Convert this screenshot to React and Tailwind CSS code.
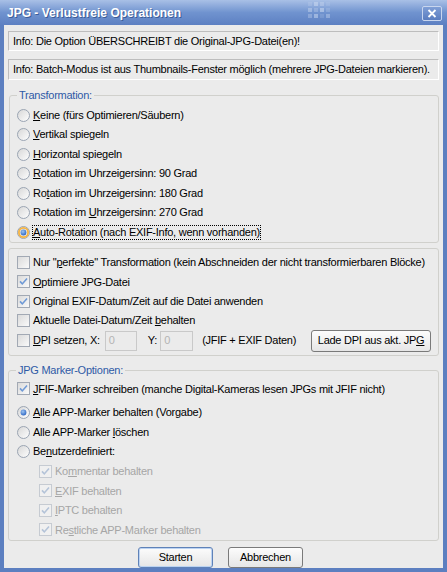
import React from "react";

const F = "font-['Liberation_Sans',Arial,sans-serif]";

function L({ t, u }) {
  if (u === undefined || u < 0) return <span>{t}</span>;
  return (
    <span>
      {t.slice(0, u)}
      <span className="underline decoration-1 underline-offset-[1px]">{t[u]}</span>
      {t.slice(u + 1)}
    </span>
  );
}

function RadioIcon({ checked, hot }) {
  return (
    <svg width="13" height="13" viewBox="0 0 13 13" className="shrink-0">
      <defs>
        <linearGradient id="rg" x1="0" y1="0" x2="1" y2="1">
          <stop offset="0" stopColor="#d6d6d6" />
          <stop offset="1" stopColor="#ffffff" />
        </linearGradient>
        <radialGradient id="rd" cx="0.4" cy="0.35" r="0.7">
          <stop offset="0" stopColor="#9cc4f2" />
          <stop offset="1" stopColor="#2a63c2" />
        </radialGradient>
      </defs>
      <circle cx="6.5" cy="6.5" r="6" fill="url(#rg)" stroke="#9aa4b2" strokeWidth="1" />
      {hot && <circle cx="6.5" cy="6.5" r="4.6" fill="none" stroke="#f6b441" strokeWidth="1.8" />}
      {checked && <circle cx="6.5" cy="6.5" r="2.9" fill="url(#rd)" />}
    </svg>
  );
}

function CheckIcon({ checked, disabled }) {
  return (
    <svg width="13" height="13" viewBox="0 0 13 13" className="shrink-0">
      <defs>
        <linearGradient id="cg" x1="0" y1="0" x2="1" y2="1">
          <stop offset="0" stopColor="#d9d9d9" />
          <stop offset="1" stopColor="#fbfbfb" />
        </linearGradient>
      </defs>
      <rect x="0.5" y="0.5" width="12" height="12" fill={disabled ? "#f0f0f0" : "url(#cg)"} stroke={disabled ? "#c6cbd2" : "#a2a9b4"} />
      {checked && (
        <path d="M3 6.4 L5.3 8.9 L10 3.4" fill="none" stroke={disabled ? "#b4c3d8" : "#6f9ad6"} strokeWidth="1.6" />
      )}
    </svg>
  );
}

function Radio({ t, u, checked, hot, focus, h = "h-[19.5px]" }) {
  return (
    <div className={`flex items-center whitespace-nowrap ${h}`}>
      <RadioIcon checked={checked} hot={hot} />
      <span className={`ml-[3px] leading-[13px] ${focus ? "outline outline-1 outline-dotted outline-black" : ""}`}>
        <L t={t} u={u} />
      </span>
    </div>
  );
}

function Check({ t, u, checked, disabled, h = "h-[19.5px]" }) {
  return (
    <div className={`flex items-center whitespace-nowrap ${h}`}>
      <CheckIcon checked={checked} disabled={disabled} />
      <span className={`ml-[3px] ${disabled ? "text-[#a6a6a6]" : ""}`}>
        <L t={t} u={u} />
      </span>
    </div>
  );
}

function Group({ label, className, children }) {
  return (
    <div className={`relative border border-[#d0d0cc] rounded-[3px] ${className}`}>
      {label && (
        <span className="absolute left-[7px] top-[-8px] px-[2px] bg-[#ebebeb] text-[#2f5aa6] leading-[14px] whitespace-nowrap">
          {label}
        </span>
      )}
      {children}
    </div>
  );
}

function Btn({ children, def, className }) {
  return (
    <div
      className={`flex items-center justify-center whitespace-nowrap rounded-[3px] border ${
        def ? "border-[#5f82b8] shadow-[inset_0_0_0_1px_#bcd3f2]" : "border-[#7a7a7a]"
      } bg-gradient-to-b from-[#fcfcfc] to-[#e6e6e6] ${className}`}
    >
      {children}
    </div>
  );
}

export default function App() {
  return (
    <div className={`w-[447px] h-[572px] flex flex-col bg-[#5c7fc0] ${F} text-[11px] tracking-[-0.25px] text-black`}>
      {/* Title bar */}
      <div className="relative h-[25px] shrink-0 flex items-center bg-gradient-to-b from-[#a9c0e6] via-[#7093cf] to-[#5d80c2]">
        <span className="ml-[7px] text-white font-bold text-[12px] tracking-normal whitespace-nowrap [text-shadow:1px_1px_0_#3c5c98]">
          JPG - Verlustfreie Operationen
        </span>
        <div className="absolute left-[308px] top-[2px] grid grid-cols-4 gap-[2px] opacity-60">
          <div className="w-[4px] h-[4px] bg-[#c7d6ef] opacity-40" />
          <div className="w-[4px] h-[4px] bg-[#c7d6ef]" />
          <div className="w-[4px] h-[4px] bg-[#c7d6ef] opacity-70" />
          <div className="w-[4px] h-[4px] bg-[#c7d6ef] opacity-30" />
          <div className="w-[4px] h-[4px] bg-[#c7d6ef] opacity-80" />
          <div className="w-[4px] h-[4px] bg-[#c7d6ef] opacity-50" />
          <div className="w-[4px] h-[4px] bg-[#c7d6ef]" />
          <div className="w-[4px] h-[4px] bg-[#c7d6ef] opacity-40" />
          <div className="w-[4px] h-[4px] bg-[#c7d6ef] opacity-60" />
          <div className="w-[4px] h-[4px] bg-[#c7d6ef] opacity-90" />
          <div className="w-[4px] h-[4px] bg-[#c7d6ef] opacity-30" />
          <div className="w-[4px] h-[4px] bg-[#c7d6ef] opacity-70" />
        </div>
        <div className="absolute left-[422px] top-[6px] w-[20px] h-[15px] rounded-[2px] border border-[#c9d6ee] bg-gradient-to-b from-[#7f9ed6] to-[#5a7dbf] flex items-center justify-center">
          <svg width="10" height="9" viewBox="0 0 10 9">
            <path d="M1.5 1 L8.5 8 M8.5 1 L1.5 8" stroke="white" strokeWidth="1.8" />
          </svg>
        </div>
      </div>

      {/* Client area */}
      <div className="flex-1 mx-[4px] mb-[4px] bg-[#ebebeb] flex flex-col px-[4px]">
        <div className="mt-[6px] h-[20px] flex items-center whitespace-nowrap pl-[4px] border border-t-[#bdbdbd] border-l-[#bdbdbd] border-b-white border-r-white">
          Info: Die Option ÜBERSCHREIBT die Original-JPG-Datei(en)!
        </div>
        <div className="mt-[8px] h-[21px] flex items-center whitespace-nowrap pl-[4px] border border-t-[#bdbdbd] border-l-[#bdbdbd] border-b-white border-r-white">
          Info: Batch-Modus ist aus Thumbnails-Fenster möglich (mehrere JPG-Dateien markieren).
        </div>

        <Group label="Transformation:" className="mt-[15px] ml-[1px] pt-[9.5px] pl-[7px]">
          <Radio t="Keine (fürs Optimieren/Säubern)" u={0} />
          <Radio t="Vertikal spiegeln" u={0} />
          <Radio t="Horizontal spiegeln" u={0} />
          <Radio t="Rotation im Uhrzeigersinn: 90 Grad" u={0} />
          <Radio t="Rotation im Uhrzeigersinn: 180 Grad" u={2} />
          <Radio t="Rotation im Uhrzeigersinn: 270 Grad" u={12} />
          <Radio t="Auto-Rotation (nach EXIF-Info, wenn vorhanden)" u={0} checked hot focus />
        </Group>

        <Group className="mt-[5px] pt-[4px] pl-[8px] pb-[4px]">
          <Check t={'Nur "perfekte" Transformation (kein Abschneiden der nicht transformierbaren Blöcke)'} u={5} h="h-[19.25px]" />
          <Check t="Optimiere JPG-Datei" u={0} checked h="h-[19.25px]" />
          <Check t="Original EXIF-Datum/Zeit auf die Datei anwenden" checked h="h-[19.25px]" />
          <Check t="Aktuelle Datei-Datum/Zeit behalten" u={26} h="h-[19.25px]" />
          <div className="flex items-center whitespace-nowrap h-[21px]">
            <CheckIcon />
            <span className="ml-[3px]">
              <L t="DPI setzen, X:" u={0} />
            </span>
            <div className="ml-[5px] w-[32px] h-[20px] border border-[#c9c9c9] bg-[#ebebeb] text-[#b4b4b4] flex items-center pl-[3px]">0</div>
            <span className="ml-[11px]">Y:</span>
            <div className="ml-[3px] w-[33px] h-[20px] border border-[#c9c9c9] bg-[#ebebeb] text-[#b4b4b4] flex items-center pl-[3px]">0</div>
            <span className="ml-[9px]">(JFIF + EXIF Daten)</span>
            <Btn className="ml-[15px] w-[120px] h-[22px]">
              <L t="Lade DPI aus akt. JPG" u={20} />
            </Btn>
          </div>
        </Group>

        <Group label="JPG Marker-Optionen:" className="mt-[14px] pt-[8px] pl-[8px] pb-[0.5px]">
          <Check t="JFIF-Marker schreiben (manche Digital-Kameras lesen JPGs mit JFIF nicht)" u={0} checked />
          <div className="mt-[4.5px]">
            <Radio t="Alle APP-Marker behalten (Vorgabe)" u={0} checked />
            <Radio t="Alle APP-Marker löschen" u={16} />
            <Radio t="Benutzerdefiniert:" u={2} />
          </div>
          <div className="pl-[22px]">
            <Check t="Kommentar behalten" u={2} checked disabled />
            <Check t="EXIF behalten" u={0} checked disabled />
            <Check t="IPTC behalten" u={0} checked disabled />
            <Check t="Restliche APP-Marker behalten" u={2} checked disabled />
          </div>
        </Group>

        <div className="mt-[5.5px] flex justify-center gap-[15px] pr-[6px]">
          <Btn def className="w-[75px] h-[21px]">Starten</Btn>
          <Btn className="w-[75px] h-[21px]">Abbrechen</Btn>
        </div>
      </div>
    </div>
  );
}
